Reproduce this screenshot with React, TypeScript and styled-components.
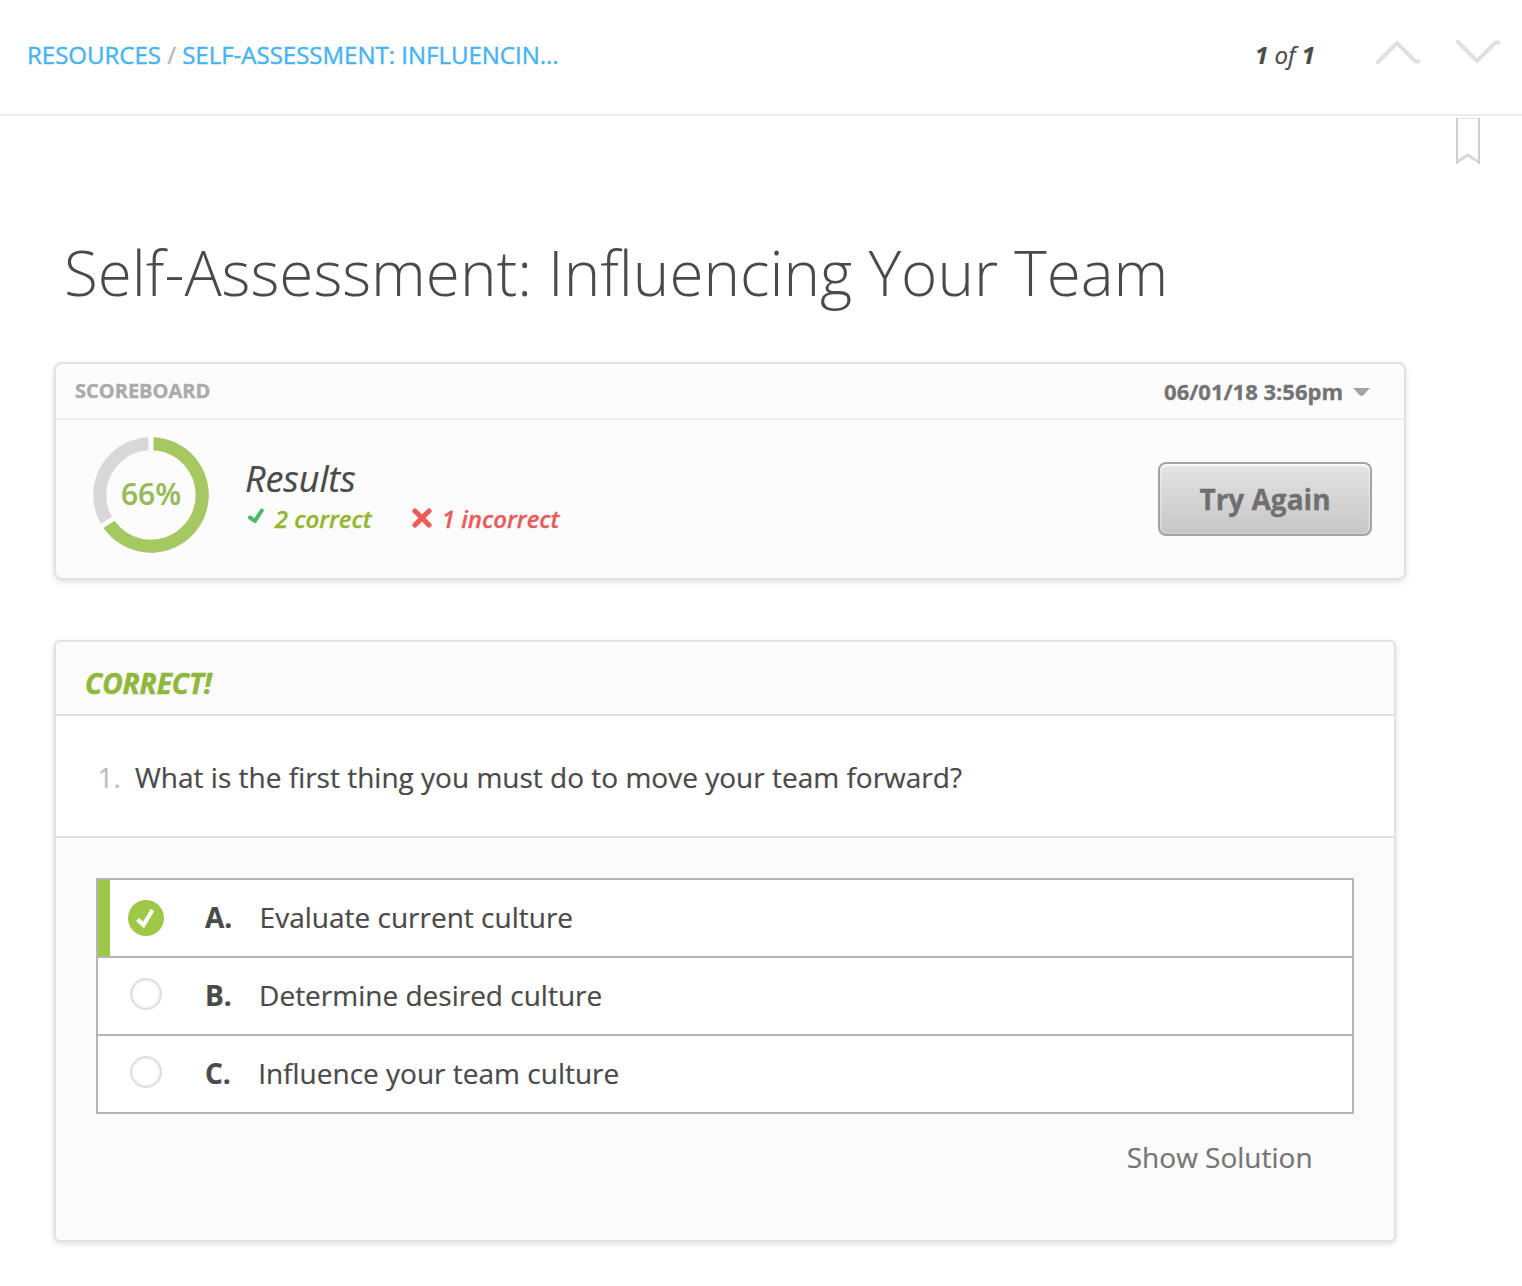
import React from "react";
import styled, { createGlobalStyle } from "styled-components";

const GlobalStyle = createGlobalStyle`
  *, *::before, *::after { box-sizing: border-box; }
  body {
    margin: 0;
    background: #fff;
    color: #4a4a4a;
    font-family: "Open Sans", "Noto Sans", sans-serif;
    -webkit-text-stroke: 0.2px currentColor;
  }
`;

const Page = styled.div`
  width: 1522px;
  height: 1286px;
  overflow: hidden;
  background: #fff;
`;

const TopBar = styled.header`
  display: flex;
  align-items: flex-start;
  justify-content: space-between;
  height: 116px;
  padding: 38px 22px 0 27px;
  border-bottom: 2px solid #ededed;
`;

const Breadcrumb = styled.nav`
  font-size: 24px;
  line-height: 33px;
  color: #b9b9b9;
  white-space: pre;
  -webkit-text-stroke: 0.4px currentColor;
`;

const Crumb = styled.a`
  color: #46b3f2;
`;

const Pager = styled.div`
  display: flex;
  align-items: flex-start;
`;

const PageCount = styled.div`
  margin-right: 61px;
  font-size: 24px;
  line-height: 33px;
  font-style: italic;
  white-space: pre;

  b { font-weight: 700; }
`;

const Chevron = styled.svg`
  display: block;
  width: 44px;
  height: 24px;
  margin-top: 2px;

  & + & { margin-left: 36px; }
`;

const BookmarkRow = styled.div`
  display: flex;
  justify-content: flex-end;
  padding: 2px 42px 0 0;

  svg { display: block; }
`;

const Title = styled.h1`
  margin: 66px 0 0 64px;
  font-size: 62px;
  line-height: 84px;
  font-weight: 300;
  letter-spacing: -0.015px;
  white-space: nowrap;
  -webkit-text-stroke: 0;
`;

const Card = styled.section<{ $width: number; $radius: number }>`
  width: ${(p) => p.$width}px;
  margin-left: 54px;
  border: 2px solid #e1e1e1;
  border-radius: ${(p) => p.$radius}px;
  background: #fcfcfc;
  box-shadow: 0 2px 6px rgba(0, 0, 0, 0.12);
  overflow: hidden;
`;

const ScoreCard = styled(Card)`
  height: 218px;
  margin-top: 48px;
`;

const ScoreHeader = styled.div`
  display: flex;
  justify-content: space-between;
  align-items: flex-start;
  height: 56px;
  padding: 12px 34px 0 19px;
  border-bottom: 2px solid #ededed;
`;

const ScoreLabel = styled.div`
  margin-top: 1px;
  font-size: 20px;
  line-height: 27px;
  font-weight: 700;
  color: #ababab;
  -webkit-text-stroke: 0.4px currentColor;
`;

const Attempt = styled.div`
  display: flex;
  align-items: center;
  gap: 10px;
  font-size: 22px;
  line-height: 30px;
  font-weight: 700;
  color: #737373;
  -webkit-text-stroke: 0.3px currentColor;

  svg { display: block; margin-top: 2px; }
`;

const ScoreBody = styled.div`
  display: flex;
  align-items: flex-start;
  padding: 17px 32px 0 37px;
`;

const Gauge = styled.div`
  display: grid;
  width: 116px;
  height: 116px;

  > * { grid-area: 1 / 1; }
`;

const GaugeValue = styled.div`
  align-self: start;
  justify-self: center;
  margin-top: 36px;
  font-size: 30px;
  line-height: 41px;
  font-weight: 600;
  color: #96ba58;
`;

const Summary = styled.div`
  flex: 1;
  margin: 18px 0 0 36px;
`;

const SummaryTitle = styled.div`
  font-size: 36px;
  line-height: 48px;
  letter-spacing: -0.1px;
  font-style: italic;
`;

const Tallies = styled.div`
  display: flex;
  align-items: flex-start;
  margin-top: -1px;
  padding-left: 3px;
`;

const Tally = styled.div<{ $color: string; $width: number; $gap: number }>`
  display: flex;
  align-items: flex-start;
  gap: ${(p) => p.$gap}px;
  width: ${(p) => p.$width}px;
  font-size: 24px;
  line-height: 33px;
  font-weight: 600;
  font-style: italic;
  color: ${(p) => p.$color};
  white-space: nowrap;
  -webkit-text-stroke: 0.3px currentColor;

  svg { display: block; flex: none; margin-top: 6px; }
`;

const Button = styled.button`
  width: 214px;
  height: 74px;
  margin-top: 25px;
  padding: 0;
  border: 2px solid #a4a4a4;
  border-radius: 8px;
  background: linear-gradient(#e4e4e4, #c6c6c6);
  box-shadow: inset 0 2px 2px rgba(255, 255, 255, 0.9), inset 0 0 3px rgba(255, 255, 255, 0.6);
  font: 700 28px/38px "Open Sans", "Noto Sans", sans-serif;
  color: #6f6f6f;
  -webkit-text-stroke: 0.3px currentColor;
`;

const QuestionCard = styled(Card)`
  height: 602px;
  margin-top: 60px;
  background: #fbfbfb;
`;

const Verdict = styled.div`
  height: 74px;
  padding: 22px 0 0 29px;
  border-bottom: 2px solid #e1e1e1;
  font-size: 28px;
  line-height: 38px;
  font-weight: 700;
  font-style: italic;
  color: #90b83e;
  -webkit-text-stroke: 0.6px currentColor;
`;

const Question = styled.div`
  display: flex;
  height: 122px;
  padding: 42px 0 0 41.5px;
  border-bottom: 2px solid #e1e1e1;
  background: #fff;
  font-size: 28px;
  line-height: 38px;
`;

const QuestionNumber = styled.span`
  width: 37.5px;
  color: #bdbdbd;
`;

const Options = styled.ul`
  margin: 40px 40px 0;
  padding: 0;
  border: 2px solid #b5b5b5;
  background: #fff;
  list-style: none;
`;

const Option = styled.li<{ $selected?: boolean }>`
  display: flex;
  align-items: flex-start;
  height: 76px;
  padding-left: ${(p) => (p.$selected ? 18 : 32)}px;
  border-left: ${(p) => (p.$selected ? "12px solid #9fc849" : "0")};
  font-size: 28px;
  line-height: 38px;

  & + & {
    height: 78px;
    border-top: 2px solid #b5b5b5;
  }
`;

const CheckMark = styled.svg`
  display: block;
  width: 36px;
  height: 36px;
  margin: 20px 41px 0 0;
`;

const Radio = styled.span`
  width: 32px;
  height: 32px;
  margin: 20px 43px 0 0;
  border: 2px solid #dedede;
  border-radius: 50%;
  background: #fff;
  box-shadow: inset 0 0 3px rgba(0, 0, 0, 0.14);
`;

const OptionLetter = styled.b`
  margin: 18px 27.3px 0 0;
  font-weight: 700;
`;

const OptionText = styled.span`
  margin-top: 18px;
`;

const SolutionRow = styled.div`
  display: flex;
  justify-content: flex-end;
  padding: 24px 81.4px 0 0;
  font-size: 28px;
  line-height: 38px;
  color: #757575;
`;

const options = [
  { letter: "A.", text: "Evaluate current culture", selected: true },
  { letter: "B.", text: "Determine desired culture", selected: false },
  { letter: "C.", text: "Influence your team culture", selected: false },
];

export default function App() {
  return (
    <Page>
      <GlobalStyle />
      <TopBar>
        <Breadcrumb>
          <Crumb>RESOURCES</Crumb>
          {" / "}
          <Crumb>SELF-ASSESSMENT: INFLUENCIN...</Crumb>
        </Breadcrumb>
        <Pager>
          <PageCount>
            <b>1</b>
            {" of "}
            <b>1</b>
          </PageCount>
          <Chevron viewBox="0 0 44 24" fill="none" stroke="#e0e0e0" strokeWidth="4">
            <path d="M0.5 23.5 L21 3 L39.5 21.5 H44" />
          </Chevron>
          <Chevron viewBox="0 0 44 24" fill="none" stroke="#e0e0e0" strokeWidth="4">
            <path d="M0.5 0.5 L21 21 L39.5 2.5 H44" />
          </Chevron>
        </Pager>
      </TopBar>

      <BookmarkRow>
        <svg width="24" height="46" viewBox="0 0 24 46" fill="none">
          <path d="M1 0.5 H23" stroke="#e6e6e6" strokeWidth="1" />
          <path d="M1 44 L11.5 37 L23 44" stroke="#dadada" strokeWidth="3" />
          <path d="M1 0 V46 M23 0 V46" stroke="#cfcfcf" strokeWidth="2" />
        </svg>
      </BookmarkRow>

      <Title>Self-Assessment: Influencing Your Team</Title>

      <ScoreCard $width={1352} $radius={8}>
        <ScoreHeader>
          <ScoreLabel>SCOREBOARD</ScoreLabel>
          <Attempt>
            06/01/18 3:56pm
            <svg width="17" height="8" viewBox="0 0 17 8">
              <path d="M0 0 H17 L10.5 7 Q8.5 8.8 6.5 7 Z" fill="#a3a3a3" />
            </svg>
          </Attempt>
        </ScoreHeader>
        <ScoreBody>
          <Gauge>
            <svg width="116" height="116" viewBox="-58 -58 116 116" fill="none">
              <circle r="51.2" stroke="#d8d8d8" strokeWidth="13" />
              <path d="M0 -51.2 A51.2 51.2 0 1 1 -43.3 27.3" stroke="#a5c960" strokeWidth="13" />
              <path d="M0 0 V-60 M0 0 L-50.7 32" stroke="#fcfcfc" strokeWidth="5" />
            </svg>
            <GaugeValue>66%</GaugeValue>
          </Gauge>
          <Summary>
            <SummaryTitle>Results</SummaryTitle>
            <Tallies>
              <Tally $color="#94b62c" $width={164} $gap={9.8}>
                <svg width="17" height="18" viewBox="0 0 17 18" fill="none">
                  <path
                    d="M2 9.5 L7 13 L13.8 2.5"
                    stroke="#4cbb69"
                    strokeWidth="4"
                    strokeLinecap="round"
                    strokeLinejoin="round"
                  />
                </svg>
                2 correct
              </Tally>
              <Tally $color="#e65c5c" $width={150} $gap={9.8}>
                <svg width="20" height="20" viewBox="0 0 20 20" fill="none">
                  <path
                    d="M3 3 L17 17 M17 3 L3 17"
                    stroke="#f15a58"
                    strokeWidth="5.2"
                    strokeLinecap="round"
                  />
                </svg>
                1 incorrect
              </Tally>
            </Tallies>
          </Summary>
          <Button type="button">Try Again</Button>
        </ScoreBody>
      </ScoreCard>

      <QuestionCard $width={1342} $radius={6}>
        <Verdict>CORRECT!</Verdict>
        <Question>
          <QuestionNumber>1.</QuestionNumber>
          What is the first thing you must do to move your team forward?
        </Question>
        <Options>
          {options.map((o) => (
            <Option key={o.letter} $selected={o.selected}>
              {o.selected ? (
                <CheckMark viewBox="0 0 36 36" fill="none">
                  <circle cx="18" cy="18" r="18" fill="#9fc849" />
                  <path d="M9.5 19.5 L15.5 25 L24.5 10" stroke="#fff" strokeWidth="4.2" />
                </CheckMark>
              ) : (
                <Radio />
              )}
              <OptionLetter>{o.letter}</OptionLetter>
              <OptionText>{o.text}</OptionText>
            </Option>
          ))}
        </Options>
        <SolutionRow>Show Solution</SolutionRow>
      </QuestionCard>
    </Page>
  );
}
